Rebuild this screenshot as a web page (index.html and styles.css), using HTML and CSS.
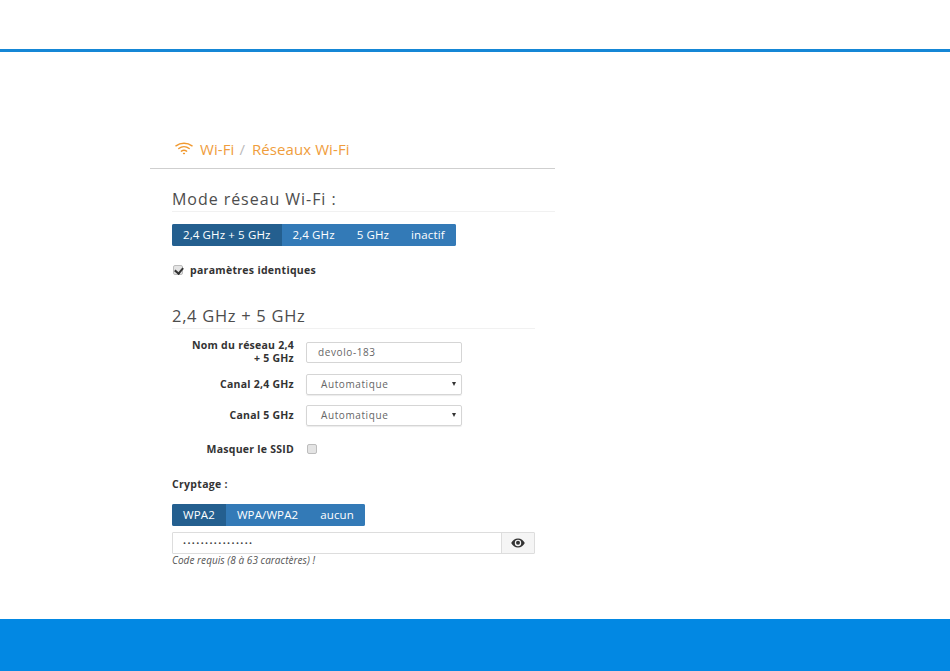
FILE: index.html
```html
<!DOCTYPE html>
<html lang="fr">
<head>
<meta charset="utf-8">
<title>Réseaux Wi-Fi</title>
<link rel="stylesheet" href="styles.css">
</head>
<body>
<header class="topbar"></header>
<main class="content">
  <nav class="crumbs">
    <svg class="wifi" width="18" height="13" viewBox="0 0 18 13" fill="none" stroke="#f0992f" stroke-width="1.5" stroke-linecap="round"><path d="M1 3.800C5.600.5 12.400.5 17 3.800"/><path d="M3.800 6.500c3-2.200 7.400-2.200 10.400 0"/><path d="M6.400 9.100c1.600-1 3.600-1 5.200 0"/><path d="M8.600 11.500h.8"/></svg>
    <span>Wi-Fi</span><span class="sep">/</span><span>Réseaux Wi-Fi</span>
  </nav>
  <section class="panel">
    <h2 class="title first">Mode réseau Wi-Fi :</h2>
    <div class="btns modes">
      <span class="btn on">2,4 GHz + 5 GHz</span><span class="btn">2,4 GHz</span><span class="btn">5 GHz</span><span class="btn">inactif</span>
    </div>
    <label class="same"><input type="checkbox" checked class="cb"><span>paramètres identiques</span></label>
    <div class="narrow">
      <h2 class="title second">2,4 GHz + 5 GHz</h2>
      <div class="row r1"><div class="lab">Nom du réseau 2,4<br>+ 5 GHz</div><div class="field text">devolo-183</div></div>
      <div class="row r2"><div class="lab">Canal 2,4 GHz</div><div class="field select">Automatique<span class="caret"></span></div></div>
      <div class="row r3"><div class="lab">Canal 5 GHz</div><div class="field select">Automatique<span class="caret"></span></div></div>
      <div class="row r4"><div class="lab">Masquer le SSID</div><input type="checkbox" class="cb"></div>
      <div class="crypt">Cryptage :</div>
      <div class="btns">
        <span class="btn on">WPA2</span><span class="btn">WPA/WPA2</span><span class="btn">aucun</span>
      </div>
      <div class="pw">
        <div class="pwinput">••••••••••••••••</div>
        <div class="addon"><svg width="14" height="10" viewBox="0 0 14 10"><path fill="#333" d="M7 .5C4 .5 1.500 2.300.2 5 1.500 7.700 4 9.500 7 9.500s5.500-1.800 6.800-4.500C12.500 2.300 10 .5 7 .5zm0 7.700A3.200 3.200 0 1 1 7 1.800a3.200 3.200 0 0 1 0 6.400z"/><circle cx="7" cy="4.800" r="2" fill="#333"/></svg></div>
      </div>
      <p class="hint">Code requis (8 à 63 caractères) !</p>
    </div>
  </section>
</main>
<footer class="foot"></footer>
</body>
</html>
```
FILE: styles.css
```css
* { box-sizing: border-box; }
html, body { margin: 0; padding: 0; height: 671px; overflow: hidden; background: #fff; }
body {
  display: flex;
  flex-direction: column;
  font-family: "Open Sans", "Liberation Sans", sans-serif;
  color: #333;
}
.topbar { height: 52px; flex: none; border-bottom: 3px solid #1587d6; }
.content { flex: 1; padding: 87px 0 0 150px; }
.foot { height: 52px; flex: none; background: #0288e3; }

.crumbs {
  width: 405px;
  height: 30px;
  padding-left: 25px;
  border-bottom: 1px solid #cfcfcf;
  display: flex;
  align-items: flex-start;
  gap: 5px;
  font-size: 15px;
  line-height: 20px;
  letter-spacing: .08px;
  color: #ef9d3c;
}
.wifi { margin-top: 3px; margin-right: 2px; }
.sep { color: #bbb; margin-right: 2px; }

.panel { width: 405px; padding-left: 22px; }
.title {
  margin: 0;
  font-weight: 400;
  color: #4d4d4d;
  border-bottom: 1px solid #f1f1f1;
}
.first { margin-top: 19px; height: 24px; font-size: 16px; line-height: 22px; letter-spacing: .95px; }
.second { height: 24px; font-size: 16.500px; line-height: 22px; letter-spacing: .7px; }

.btns { display: flex; width: max-content; margin-top: 12px; border-radius: 2px; overflow: hidden; background: #337ab7; }
.btn {
  height: 22px;
  padding: 0 11px;
  font-size: 11.500px;
  line-height: 22px;
  letter-spacing: .12px;
  color: #fff;
  background: #337ab7;
}
.btn.on { background: #245f8f; }

.same { display: flex; align-items: center; gap: 7px; margin-top: 18px; height: 12px; font-size: 10.500px; font-weight: 700; letter-spacing: .3px; color: #333; }
.cb {
  appearance: none;
  width: 10px;
  height: 10px;
  margin: 0 0 0 1px;
  flex: none;
  position: relative;
  background: #e4e4e4;
  border: 1px solid #bdbdbd;
  border-radius: 2px;
}
.cb:checked::after {
  content: "";
  position: absolute;
  left: 2px;
  top: 0;
  width: 4px;
  height: 6px;
  border: solid #333;
  border-width: 0 2px 2px 0;
  transform: rotate(40deg);
}

.narrow { width: 363px; margin-top: 29px; }
.row { display: flex; align-items: center; }
.lab { width: 122px; margin-right: 12px; text-align: right; font-size: 10.500px; font-weight: 700; line-height: 13px; letter-spacing: .25px; color: #333; flex: none; }
.field { width: 156px; border: 1px solid #d5d5d5; border-radius: 2px; font-size: 10px; letter-spacing: .6px; color: #666; position: relative; }
.text { height: 21px; line-height: 19px; padding-left: 11px; }
.select { height: 21px; line-height: 19px; padding-left: 14px; box-shadow: 0 1px 1px rgba(0,0,0,.08); }
.caret { position: absolute; right: 5px; top: 7px; width: 0; height: 0; border: 2.500px solid transparent; border-top: 4px solid #333; border-bottom: 0; }
.r1 { margin-top: 10px; height: 26px; }
.r2 { margin-top: 9px; }
.r3 { margin-top: 10px; }
.r4 { margin-top: 15px; height: 16px; }

.crypt { margin-top: 21px; font-size: 10.500px; font-weight: 700; line-height: 13px; letter-spacing: .3px; color: #333; }
.crypt + .btns { margin-top: 13px; }

.pw { display: flex; height: 22px; margin-top: 6px; border: 1px solid #ddd; border-radius: 1px; }
.pwinput { flex: 1; padding-left: 10px; font-size: 8px; line-height: 20px; letter-spacing: 1.400px; color: #444; }
.addon { width: 33px; border-left: 1px solid #ddd; background: #f5f5f5; display: flex; align-items: center; justify-content: center; }
.hint { margin: 0; font-size: 10px; font-style: italic; line-height: 12px; letter-spacing: .05px; color: #555; }
```
